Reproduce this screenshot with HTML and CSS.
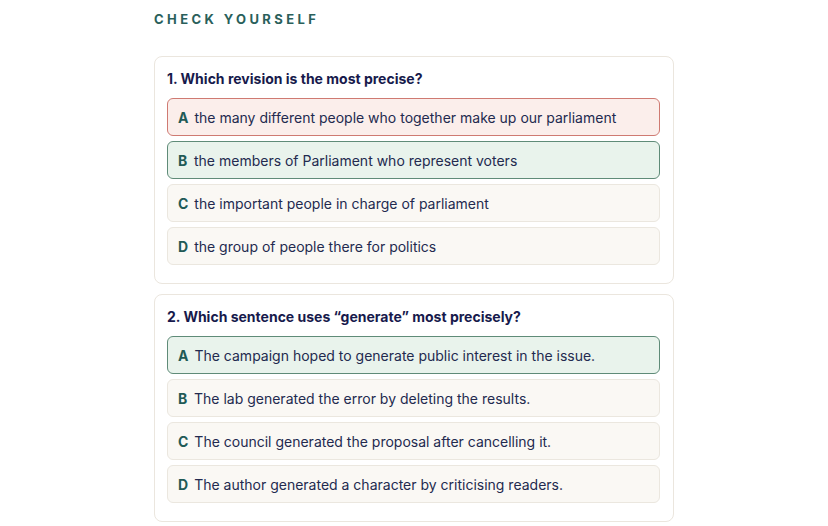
FILE: index.html
```html
<!DOCTYPE html>
<html lang="en">
<head>
<meta charset="utf-8">
<title>Check yourself</title>
<link rel="stylesheet" href="styles.css">
</head>
<body>
<main class="quiz">
  <h2 class="eyebrow">CHECK YOURSELF</h2>

  <section class="card">
    <p class="question">1. Which revision is the most precise?</p>
    <ul class="options">
      <li class="option wrong"><span class="key">A</span><span class="text">the many different people who together make up our parliament</span></li>
      <li class="option right"><span class="key">B</span><span class="text">the members of Parliament who represent voters</span></li>
      <li class="option"><span class="key">C</span><span class="text">the important people in charge of parliament</span></li>
      <li class="option"><span class="key">D</span><span class="text">the group of people there for politics</span></li>
    </ul>
  </section>

  <section class="card">
    <p class="question">2. Which sentence uses “generate” most precisely?</p>
    <ul class="options">
      <li class="option right"><span class="key">A</span><span class="text">The campaign hoped to generate public interest in the issue.</span></li>
      <li class="option"><span class="key">B</span><span class="text">The lab generated the error by deleting the results.</span></li>
      <li class="option"><span class="key">C</span><span class="text">The council generated the proposal after cancelling it.</span></li>
      <li class="option"><span class="key">D</span><span class="text">The author generated a character by criticising readers.</span></li>
    </ul>
  </section>
</main>
</body>
</html>
```

FILE: styles.css
```css
* { box-sizing: border-box; }

html, body {
  margin: 0;
  padding: 0;
  background: #ffffff;
}

body {
  font-family: Inter, "Noto Sans", "Liberation Sans", sans-serif;
  color: #1d2450;
}

.quiz {
  width: 520px;
  margin: 0 auto;
  padding-top: 10px;
}

.eyebrow {
  margin: 0 0 28px 0;
  font-size: 13px;
  line-height: 18px;
  font-weight: 700;
  letter-spacing: 3.4px;
  color: #2a5f5b;
}

.card {
  border: 1px solid #ebe6de;
  border-radius: 8px;
  background: #ffffff;
  padding: 12px 13px 18px 12px;
  margin-bottom: 10px;
}

.question {
  margin: 0 0 9px 0;
  font-size: 14px;
  line-height: 20px;
  font-weight: 700;
  color: #171a4c;
}

.options {
  list-style: none;
  margin: 0;
  padding: 0;
  display: flex;
  flex-direction: column;
  gap: 5px;
}

.option {
  height: 38px;
  display: flex;
  align-items: center;
  gap: 6px;
  padding: 0 10px;
  border: 1px solid #ebe7df;
  border-radius: 6px;
  background: #faf8f4;
  font-size: 14px;
  color: #232a4f;
}

.option.wrong {
  background: #fbeeeb;
  border-color: #cf7a72;
}

.option.right {
  background: #e9f3ec;
  border-color: #5f8b78;
}

.key {
  font-weight: 700;
  color: #1f5a56;
  min-width: 10px;
}
```
